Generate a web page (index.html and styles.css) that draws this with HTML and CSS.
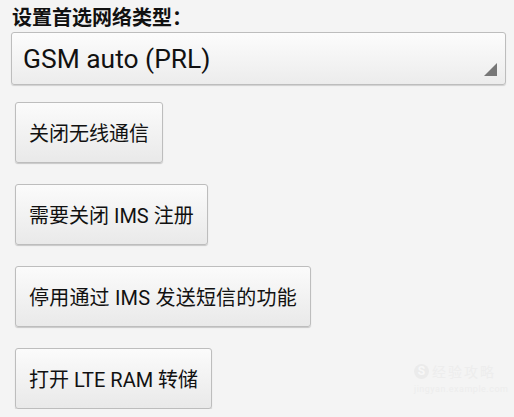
FILE: index.html
```html
<!DOCTYPE html>
<html lang="zh-CN">
<head>
  <meta charset="UTF-8" />
  <meta name="viewport" content="width=device-width, initial-scale=1.0"/>
  <title>网络设置</title>
  <link rel="stylesheet" href="styles.css">
</head>
<body>
  <div class="page">
    <div class="label">设置首选网络类型：</div>
    <div class="spinner">
      <span class="spinner-text">GSM auto (PRL)</span>
      <span class="spinner-arrow"></span>
    </div>

    <div class="actions">
      <button class="btn">关闭无线通信</button>
      <button class="btn">需要关闭 IMS 注册</button>
      <button class="btn wide">停用通过 IMS 发送短信的功能</button>
      <button class="btn">打开 LTE RAM 转储</button>
    </div>
  </div>

  <div class="watermark">
    <div class="wm-top">
      <span class="wm-logo">S</span>
      <span class="wm-text">经验攻略</span>
    </div>
    <div class="wm-sub">jingyan.example.com</div>
  </div>
</body>
</html>
```

FILE: styles.css
```css
body {
  font-family: Roboto, "Noto Sans CJK SC", sans-serif;
  margin: 0;
  padding: 0;
  background-color: #f4f4f4;
  color: #111;
}
.page {
  padding: 6px 8px 0 11px;
}
.label {
  font-size: 20px;
  font-weight: bold;
  line-height: 24px;
  padding-left: 1px;
}
.spinner {
  margin-top: 2px;
  height: 51px;
  width: 493px;
  border: 1px solid #bdbdbd;
  border-radius: 3px;
  background: linear-gradient(#fcfcfc, #ececec);
  box-shadow: 0 1px 1px rgba(0, 0, 0, 0.15);
  display: flex;
  align-items: center;
  position: relative;
}
.spinner-text {
  font-size: 26.4px;
  padding-left: 11px;
  color: #111;
}
.spinner-arrow {
  position: absolute;
  right: 8px;
  bottom: 8px;
  width: 0;
  height: 0;
  border-left: 13px solid transparent;
  border-bottom: 13px solid #777;
}
.actions {
  display: flex;
  flex-direction: column;
  align-items: flex-start;
  gap: 21px;
  margin-top: 17px;
  margin-left: 4px;
}
.btn {
  font-family: Roboto, "Noto Sans CJK SC", sans-serif;
  font-size: 20px;
  color: #111;
  height: 61px;
  padding: 0 13px;
  border: 1px solid #bdbdbd;
  border-radius: 3px;
  background: linear-gradient(#fbfbfb, #e9e9e9);
  box-shadow: 0 1px 1px rgba(0, 0, 0, 0.18);
  cursor: pointer;
}
.btn.wide {
  letter-spacing: 0.2px;
}
.watermark {
  position: absolute;
  left: 414px;
  top: 361px;
  display: flex;
  flex-direction: column;
  gap: 3px;
  color: #ededed;
}
.wm-top {
  display: flex;
  align-items: center;
  gap: 3px;
}
.wm-logo {
  width: 15px;
  height: 15px;
  border-radius: 50%;
  background: #ebebeb;
  color: #f7f7f7;
  font-size: 12px;
  font-weight: bold;
  text-align: center;
  line-height: 15px;
}
.wm-text {
  font-size: 14px;
  letter-spacing: 2px;
}
.wm-sub {
  font-size: 9px;
  letter-spacing: 0.5px;
}
```
